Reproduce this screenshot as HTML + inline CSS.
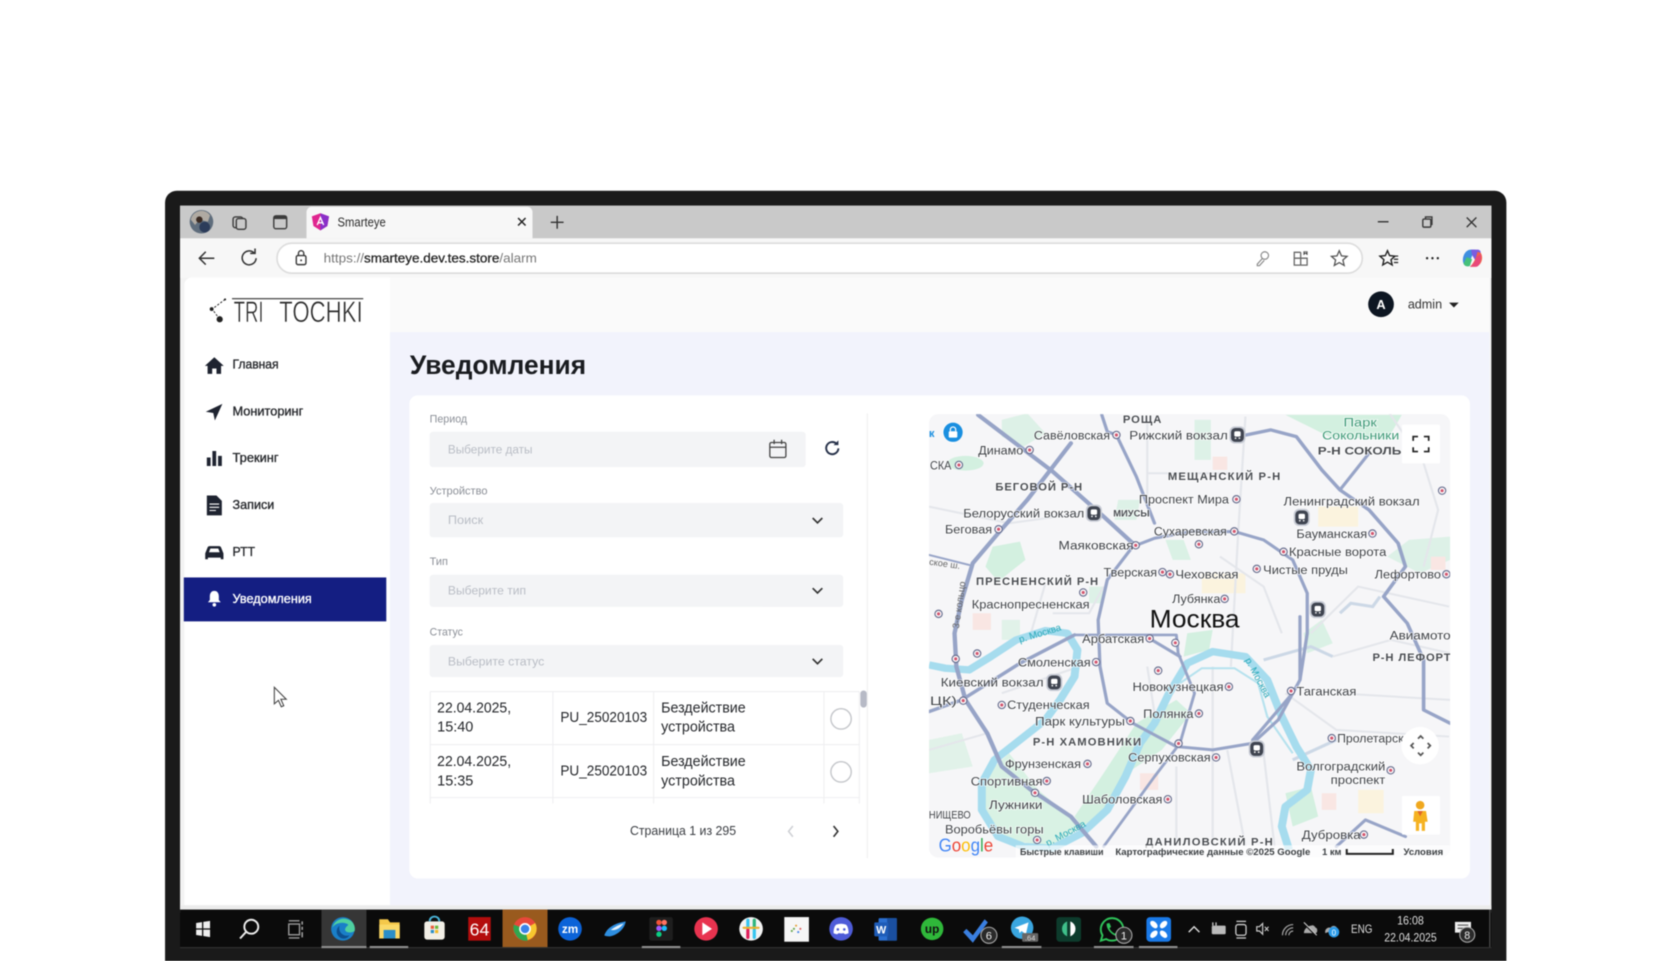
<!DOCTYPE html>
<html lang="ru">
<head>
<meta charset="utf-8">
<title>Smarteye</title>
<style>
html,body{margin:0;padding:0;background:#fff;width:1680px;height:961px;overflow:hidden}
svg{display:block;position:absolute;left:0;top:0;filter:blur(.4px)}
text{font-family:"Liberation Sans","Noto Sans CJK SC",sans-serif}
.lb{fill:#404348;font-size:11.5px;paint-order:stroke;stroke:#fff;stroke-width:1.4px;stroke-opacity:.75}
.bd{fill:#4a4d52;font-size:10.5px;font-weight:700;paint-order:stroke;stroke:#fff;stroke-width:1.4px;stroke-opacity:.75}
.nav{font-size:12px;fill:#26282c;stroke:#26282c;stroke-width:.3px}
.fl{font-size:10px;fill:#8b8f97}
.ph{font-size:11.5px;fill:#b9bdc5}
.td{font-size:13.5px;fill:#26282c}
.ft{font-size:9px;fill:#3c4043;font-weight:700}
.ic{fill:none;stroke:#3a3a3a;stroke-width:1.3}
</style>
</head>
<body>
<svg width="1680" height="961" viewBox="0 0 1568 897" xmlns="http://www.w3.org/2000/svg">
<defs>
<clipPath id="mapclip"><rect x="867" y="386.5" width="486.5" height="414" rx="9"/></clipPath>
<symbol id="d" overflow="visible"><circle r="3.4" fill="#fff" stroke="#6a6f8f" stroke-width="1.1"/><circle r="1.5" fill="#d2566f"/></symbol>
<symbol id="s" overflow="visible"><rect x="-7.500" y="-8" width="15" height="16" rx="5" fill="#c6cad4"/><rect x="-6" y="-6.5" width="12" height="13" rx="4" fill="#3f4450"/><rect x="-3" y="-3.5" width="6" height="5" rx="1.5" fill="#fff"/><circle cx="-1.8" cy="3" r=".8" fill="#fff"/><circle cx="1.8" cy="3" r=".8" fill="#fff"/></symbol>
</defs>

<!-- monitor bezel -->
<rect x="154" y="178" width="1252" height="735" rx="11" fill="#1a1a1a"/>
<rect x="168" y="192" width="1224" height="660" fill="#f3f3f3"/>

<!-- tab strip -->
<rect x="168" y="192" width="1224" height="30.5" fill="#c9c9c9"/>
<path d="M286 222.500V198a5 5 0 0 1 5-5H492a5 5 0 0 1 5 5V222.500Z" fill="#f7f7f7"/>
<circle cx="188" cy="207" r="11" fill="#5f6d7c"/>
<path d="M178 205a10 10 0 0 1 18-4l-2 6-8-2-4 5Z" fill="#b0aaa2"/>
<circle cx="191" cy="212" r="5" fill="#2c3c5a"/>
<circle cx="186" cy="205" r="3" fill="#3a2a22"/>
<rect x="217.500" y="202.500" width="9" height="10" rx="2" class="ic"/>
<rect x="220.500" y="204" width="9" height="10" rx="2" fill="#c9c9c9" stroke="#3a3a3a" stroke-width="1.300"/>
<rect x="255.500" y="201.500" width="12" height="12" rx="2" class="ic" stroke-width="1.500"/>
<rect x="255.500" y="201.500" width="12" height="3" fill="#3a3a3a"/>
<path d="M299 199l8 3-1.500 9-6.500 4-6.500-4-1.500-9Z" fill="#e0258f"/>
<path d="M299 199l8 3-1.500 9-6.500 4Z" fill="#8a2fc8"/>
<path d="M296 210l3-7 3 7M297 208h4" fill="none" stroke="#fff" stroke-width="1.300"/>
<text x="315" y="211.500" font-size="12" fill="#2b2b2b" textLength="45" lengthAdjust="spacingAndGlyphs">Smarteye</text>
<path d="M483.500 203.500l7 7M490.500 203.500l-7 7" stroke="#222" stroke-width="1.400"/>
<path d="M520 201.500v12M514 207.500h12" stroke="#333" stroke-width="1.300"/>
<path d="M1286 207h10" stroke="#333" stroke-width="1.300"/>
<rect x="1328" y="204.500" width="7.500" height="7.500" rx="1.200" class="ic"/>
<path d="M1330.500 204v-1.500h6v7h-1" class="ic"/>
<path d="M1369 203l9 9M1378 203l-9 9" stroke="#333" stroke-width="1.200"/>

<!-- toolbar -->
<rect x="168" y="222.500" width="1224" height="37" fill="#f7f7f7"/>
<rect x="258.500" y="227" width="1013" height="28" rx="14" fill="#fff" stroke="#dcdcdc" stroke-width="1.500"/>
<path d="M200 241h-14M192 235l-6 6 6 6" fill="none" stroke="#333" stroke-width="1.400"/>
<path d="M239 241a6.500 6.500 0 1 1-2-5M238 232v4.500h-4.500" fill="none" stroke="#333" stroke-width="1.400"/>
<rect x="276.500" y="238.500" width="9" height="8.500" rx="1.500" class="ic"/>
<path d="M278.500 238.500v-2a2.500 2.500 0 0 1 5 0v2" class="ic"/>
<circle cx="281" cy="243" r=".9" fill="#3a3a3a"/>
<text x="302" y="245" font-size="12" fill="#777" textLength="199" lengthAdjust="spacingAndGlyphs">https://<tspan fill="#222" stroke="#222" stroke-width=".25">smarteye.dev.tes.store</tspan>/alarm</text>
<circle cx="1180.500" cy="238.500" r="3.500" fill="none" stroke="#8a8a8a" stroke-width="1.100"/>
<path d="M1178 241.500l-4.500 5v1.500h2l4.500-5" fill="none" stroke="#8a8a8a" stroke-width="1.100"/>
<path d="M1214 235.500h-6v12h12v-6.500h-12M1214 235.500v12" fill="none" stroke="#666" stroke-width="1.200"/>
<path d="M1217 235h3v3M1220 235h-3v3" stroke="#666" stroke-width="1"/>
<path d="M1250 234l2.100 4.800 5.200.5-3.900 3.400 1.200 5.100-4.600-2.700-4.600 2.700 1.200-5.100-3.900-3.400 5.200-.5Z" fill="none" stroke="#555" stroke-width="1.200"/>
<path d="M1295 234l2 4.600 5 .5-3.700 3.300 1.100 4.900-4.400-2.600-4.400 2.600 1.100-4.900-3.700-3.300 5-.5Z" fill="none" stroke="#222" stroke-width="1.300"/>
<path d="M1300 239h5M1301 242h4M1301 245h4" stroke="#222" stroke-width="1.100"/>
<circle cx="1332" cy="241" r="1.100" fill="#222"/><circle cx="1337" cy="241" r="1.100" fill="#222"/><circle cx="1342" cy="241" r="1.100" fill="#222"/>
<path d="M1366 246c-2-5 1-13 7-13h4c-2 4-5 8-5 15-2 1-5 0-6-2Z" fill="#3f8fe0"/>
<path d="M1373 233h6c3 0 4 3 2 5l-4 5-3-5Z" fill="#7b5ce0"/>
<path d="M1382 236c3 4 1 13-6 13h-4c3-3 6-8 7-14Z" fill="#f0644a"/>
<path d="M1366 246c1 3 4 3 6 2l2-6-5-2Z" fill="#46c07a"/>
<path d="M1378 249h-6c3-2 5-5 6-9l4-3c1 5-1 12-4 12Z" fill="#e8487a"/>

<!-- page shell -->
<path d="M172 845V266a7 7 0 0 1 7-7H1383a7 7 0 0 1 7 7V845Z" fill="#fff"/>
<rect x="364" y="259" width="1026" height="51" fill="#fafafa"/>
<rect x="364" y="310" width="1026" height="535" fill="#f2f3fc"/>
<rect x="168" y="845" width="1224" height="4" fill="#ececec"/>

<!-- logo -->
<path d="M210 279.500L198 288.500L205 298" fill="none" stroke="#222" stroke-width=".9" stroke-dasharray="2 1.500"/>
<circle cx="210" cy="279.500" r="1" fill="#222"/><circle cx="197.500" cy="288.500" r="1.800" fill="#222"/><circle cx="205" cy="298" r="2.900" fill="#222"/>
<path d="M216.500 278.800H339" stroke="#333" stroke-width="1"/>
<text x="218" y="300.500" font-size="28" fill="#2a2a2a" stroke="#fff" stroke-width=".5" textLength="28" lengthAdjust="spacingAndGlyphs">TRI</text>
<text x="260.500" y="300.500" font-size="28" fill="#2a2a2a" stroke="#fff" stroke-width=".5" textLength="78" lengthAdjust="spacingAndGlyphs">TOCHKI</text>

<!-- sidebar -->
<path d="M200 333.500l-8.800 8h2.500v7.500h4.300v-5h4v5h4.300v-7.500h2.500Z" fill="#1e2330"/>
<text class="nav" x="217" y="344" textLength="43" lengthAdjust="spacingAndGlyphs">Главная</text>
<path d="M207.500 377L192 384.300 199 385.500 200.500 392.500Z" fill="#1e2330"/>
<text class="nav" x="217" y="388" textLength="66" lengthAdjust="spacingAndGlyphs">Мониторинг</text>
<path d="M193 427h3.500v8H193ZM198.200 421h3.500v14h-3.500ZM203.500 425.500H207v9.500h-3.500Z" fill="#1e2330"/>
<text class="nav" x="217" y="431" textLength="43" lengthAdjust="spacingAndGlyphs">Трекинг</text>
<path d="M193 462.500h9l5 5v13.500h-14Z" fill="#1e2330"/><path d="M195.500 470.500h9M195.500 473.500h9M195.500 476.500h6" stroke="#fff" stroke-width="1"/>
<text class="nav" x="217" y="475" textLength="39" lengthAdjust="spacingAndGlyphs">Записи</text>
<path d="M191.500 516.500l2.200-5.500c.3-.7 1-1.200 1.800-1.200h9c.8 0 1.500.5 1.800 1.200l2.200 5.500v5.500h-2.500v-1.500h-12v1.500h-2.500Z" fill="#1e2330"/><path d="M195 515.500l1.300-3.500h7.400l1.300 3.500Z" fill="#fff"/>
<text class="nav" x="217" y="519" textLength="21" lengthAdjust="spacingAndGlyphs">РТТ</text>
<rect x="171.500" y="539" width="189" height="41" fill="#141e82"/>
<path d="M200 551.500c-2.800 0-4.200 2.300-4.200 5v3.500l-1.800 2.200h12l-1.800-2.200v-3.500c0-2.700-1.400-5-4.200-5Z" fill="#fff"/><circle cx="200" cy="564.500" r="1.700" fill="#fff"/>
<text class="nav" x="217" y="563" style="fill:#fff;stroke:#fff" textLength="74" lengthAdjust="spacingAndGlyphs">Уведомления</text>
<path d="M256 641.500v15.500l3.800-3.300 2.700 6 2.300-1-2.700-6h5Z" fill="#fff" stroke="#444" stroke-width="1"/>

<!-- header -->
<circle cx="1289" cy="284" r="12" fill="#0d1622"/>
<text x="1289" y="288.500" font-size="12" font-weight="700" fill="#fff" text-anchor="middle">A</text>
<text x="1314" y="288" font-size="12" fill="#333" textLength="32" lengthAdjust="spacingAndGlyphs">admin</text>
<path d="M1352.500 282.500h9l-4.500 4.500Z" fill="#222"/>

<!-- title -->
<text x="382.500" y="349" font-size="25" font-weight="700" fill="#1a1c20" textLength="164.500" lengthAdjust="spacingAndGlyphs">Уведомления</text>

<!-- card -->
<rect x="382" y="369" width="990" height="451" rx="8" fill="#fff"/>
<path d="M809.500 386v415" stroke="#eeeeef" stroke-width="1"/>

<!-- form -->
<text class="fl" x="401" y="394.500" textLength="35" lengthAdjust="spacingAndGlyphs">Период</text>
<rect x="401" y="403" width="351" height="33" rx="3" fill="#f3f4f6"/>
<text class="ph" x="418" y="423.500" textLength="79" lengthAdjust="spacingAndGlyphs">Выберите даты</text>
<rect x="718.500" y="413" width="15" height="14" rx="1.500" fill="none" stroke="#444" stroke-width="1.200"/>
<path d="M718.500 417.500h15M722.500 410.500v4M729.500 410.500v4" stroke="#444" stroke-width="1.200"/>
<path d="M782.500 418.500a5.700 5.700 0 1 1-1.700-4.300" fill="none" stroke="#27324a" stroke-width="1.800"/>
<path d="M782.500 411v4.500H778Z" fill="#27324a"/>

<text class="fl" x="401" y="461.500" textLength="54" lengthAdjust="spacingAndGlyphs">Устройство</text>
<rect x="401" y="469.500" width="386" height="32" rx="3" fill="#f3f4f6"/>
<text class="ph" x="418" y="489" textLength="33" lengthAdjust="spacingAndGlyphs">Поиск</text>
<path d="M758.500 483.500l4.500 4.500 4.500-4.500" fill="none" stroke="#333" stroke-width="1.500"/>

<text class="fl" x="401" y="527.500" textLength="17" lengthAdjust="spacingAndGlyphs">Тип</text>
<rect x="401" y="536.500" width="386" height="30" rx="3" fill="#f3f4f6"/>
<text class="ph" x="418" y="555" textLength="73" lengthAdjust="spacingAndGlyphs">Выберите тип</text>
<path d="M758.500 549l4.500 4.500 4.500-4.500" fill="none" stroke="#333" stroke-width="1.500"/>

<text class="fl" x="401" y="593" textLength="31" lengthAdjust="spacingAndGlyphs">Статус</text>
<rect x="401" y="602" width="386" height="30" rx="3" fill="#f3f4f6"/>
<text class="ph" x="418" y="621" textLength="90" lengthAdjust="spacingAndGlyphs">Выберите статус</text>
<path d="M758.500 615l4.500 4.500 4.500-4.500" fill="none" stroke="#333" stroke-width="1.500"/>

<!-- table -->
<g stroke="#efeff1" stroke-width="1" fill="none">
<path d="M401.500 645.500H802M401.500 695H802M401.500 744.500H802"/>
<path d="M401.500 645.500V750M516 645.500V750M610 645.500V750M769 645.500V750M802 645.500V750"/>
</g>
<text class="td" x="408" y="665" textLength="69" lengthAdjust="spacingAndGlyphs">22.04.2025,</text>
<text class="td" x="408" y="683">15:40</text>
<text class="td" x="523" y="674" textLength="81" lengthAdjust="spacingAndGlyphs">PU_25020103</text>
<text class="td" x="617" y="665" textLength="79" lengthAdjust="spacingAndGlyphs">Бездействие</text>
<text class="td" x="617" y="683" textLength="69" lengthAdjust="spacingAndGlyphs">устройства</text>
<circle cx="785" cy="671" r="9.500" fill="#fff" stroke="#c4c6ca" stroke-width="1.300"/>
<text class="td" x="408" y="715" textLength="69" lengthAdjust="spacingAndGlyphs">22.04.2025,</text>
<text class="td" x="408" y="733">15:35</text>
<text class="td" x="523" y="724" textLength="81" lengthAdjust="spacingAndGlyphs">PU_25020103</text>
<text class="td" x="617" y="715" textLength="79" lengthAdjust="spacingAndGlyphs">Бездействие</text>
<text class="td" x="617" y="733" textLength="69" lengthAdjust="spacingAndGlyphs">устройства</text>
<circle cx="785" cy="720.500" r="9.500" fill="#fff" stroke="#c4c6ca" stroke-width="1.300"/>
<rect x="803" y="644.500" width="6" height="16" rx="3" fill="#b7bac6"/>

<text x="588" y="779.500" font-size="12" fill="#3a3d42" textLength="99" lengthAdjust="spacingAndGlyphs">Страница 1 из 295</text>
<path d="M740 771l-4 5 4 5" fill="none" stroke="#cfd1d5" stroke-width="1.500"/>
<path d="M778 771l4 5-4 5" fill="none" stroke="#333" stroke-width="1.500"/>

<!-- map -->
<g clip-path="url(#mapclip)">
<rect x="867" y="386.500" width="487" height="414" fill="#f6f6f8"/>
<g transform="translate(840 373.300) scale(.3394 .3111)">
  <g fill="#d3f0e0">
    <path d="M280 60l70-20 50 60-60 40-60-30Z" opacity=".7"/>
    <ellipse cx="180" cy="190" rx="50" ry="22"/>
    <path d="M255 440L330 425 345 480 270 545 235 500Z"/>
    <path d="M1060 45H1380L1340 120 1180 110Z"/>
    <path d="M810 60h45v120h-45Z" opacity=".7"/>
    <path d="M730 420l50 0 20 60-50 0Z" opacity=".8"/>
    <path d="M790 700L860 690 850 750 780 770Z"/>
    <path d="M650 970L760 900 800 940 720 1050 610 1130 570 1230 500 1280 480 1250 560 1120Z"/>
    <path d="M1340 470L1400 420 1513 410 1513 480 1430 520Z" opacity=".7"/>
    <path d="M280 660h50v60h-50Z" opacity=".6"/>
    <path d="M1110 700l50-40 30 70-70 30Z" opacity=".8"/>
    <path d="M1060 1180l70-20 20 90-70 30Z"/>
    <path d="M80 1020l90-20 30 100-120 20Z" opacity=".6"/>
    <path d="M600 300l60 0-10 60-60 0Z" opacity=".7"/>
    <path d="M520 560h40v50h-40Z" opacity=".7"/>
  </g>
  <path d="M230 1130L300 1060 380 1170 500 1280 420 1340 290 1320 230 1240Z" fill="#d9f2e4"/>
  <g fill="#fbf3de">
    <path d="M830 520h120v60H830Z"/><path d="M1150 320h110v60h-110Z"/><path d="M860 170h40v40h-40Z" fill="#f9e6e3"/>
    <path d="M1260 1170h70v70h-70Z"/><path d="M1160 1180h40v50h-40Z" fill="#f9e6e3"/><path d="M200 640h50v50h-50Z" fill="#f9e6e3"/>
    <path d="M660 1120h50v50h-50Z" fill="#f9e6e3"/><path d="M1460 470h40v40h-40Z" fill="#f9e6e3"/>
  </g>
  <g fill="none" stroke="#e4e6eb" stroke-width="6">
    <path d="M80 320L300 370 500 340"/><path d="M680 60V300M680 220L950 220"/><path d="M950 50L930 400 910 800"/>
    <path d="M420 640H520L560 560"/><path d="M880 470L1000 560 1050 700"/><path d="M1060 880L1200 990 1510 1010"/>
    <path d="M1130 700L1260 560 1510 620"/><path d="M1200 880L1513 900"/><path d="M860 800V1340"/><path d="M1000 1060L1030 1340"/>
    <path d="M760 1100V1340M900 1050L950 1340"/><path d="M80 1050L240 1000"/><path d="M280 880L520 790"/><path d="M1340 30L1440 190 1480 330 1440 500"/>
    <path d="M680 800L700 940"/><path d="M400 550L360 700"/><path d="M1190 770L1350 720 1513 760"/>
  </g>
  <g fill="none" stroke="#ccd8e6" stroke-width="9">
    <path d="M1210 640l30-30 60 10 20-30"/><path d="M1000 780L1130 740 1190 770"/><path d="M1080 1080L1200 1020"/>
  </g>
  <path d="M80 795L125 805 190 810 250 770 320 720 400 692 460 700 488 750 480 830 440 900 400 960 330 1020 260 1080 225 1150 225 1230 270 1310 340 1340 420 1345 500 1300 570 1230 620 1130 660 1030 700 970 740 880 790 790 860 755 950 770 1010 840 1050 950 1090 1040 1130 1110 1120 1170 1060 1220 1050 1280 1070 1350" fill="none" stroke="#a6dcee" stroke-width="22" stroke-linejoin="round"/>
  <path d="M770 850L830 805 920 805 985 850 1010 950 1080 1060" fill="none" stroke="#b6e2ee" stroke-width="6"/>
  <g fill="none" stroke="#97a4c7" stroke-width="9" stroke-linejoin="round" stroke-linecap="round">
    <path d="M700 415L640 440 570 540 545 660 550 800 570 910 640 970 760 1040 860 1050 970 1030 1040 960 1100 840 1120 700 1120 580 1080 480 1000 420 920 395 800 395Z"/>
    <path d="M215 45L420 215 560 350 650 440" stroke-width="12"/>
    <path d="M470 130L410 215 350 300 270 400 200 490 170 600 150 700 155 800 180 900 240 1000 280 1100 360 1170 470 1250 540 1340" stroke-width="12"/>
    <path d="M555 45l15 50 25 10 55 125 50 140"/>
    <path d="M930 110L1020 90 1090 110 1160 210 1210 270 1290 330 1370 430 1390 500 1330 590 1395 670 1440 780 1440 930 1513 970" stroke-width="10"/>
    <path d="M1210 270L1290 160"/>
    <path d="M480 705H760L765 760 810 880 770 1030 700 1130 560 1340" stroke-width="8"/>
    <path d="M480 705L330 790 170 900 80 935" stroke-width="10"/>
    <path d="M1080 880L970 1020"/>
    <path d="M1100 840V650"/>
    <path d="M1390 1310L1280 1260 1200 1340"/>
    <path d="M685 715L770 770"/>
    <path d="M190 495L80 465" stroke-width="6"/>
  </g>
</g>

<!-- district labels -->
<text class="bd" x="1048" y="395" textLength="36" lengthAdjust="spacing">РОЩА</text>
<text class="lb" x="1254" y="398" style="fill:#3f9a78" textLength="31" lengthAdjust="spacingAndGlyphs">Парк</text>
<text class="lb" x="1234" y="410" style="fill:#3f9a78" textLength="72" lengthAdjust="spacingAndGlyphs">Сокольники</text>
<text class="bd" x="1230" y="424" textLength="78" lengthAdjust="spacingAndGlyphs">Р-Н СОКОЛЬ</text>
<text class="bd" x="929" y="458" textLength="81" lengthAdjust="spacing">БЕГОВОЙ Р-Н</text>
<text class="bd" x="1090" y="448" textLength="105" lengthAdjust="spacing">МЕЩАНСКИЙ Р-Н</text>
<text class="bd" x="1039" y="482" style="font-size:9px" textLength="34" lengthAdjust="spacingAndGlyphs">МИУСЫ</text>
<text class="bd" x="911" y="546" textLength="114" lengthAdjust="spacing">ПРЕСНЕНСКИЙ Р-Н</text>
<text class="bd" x="964" y="696" textLength="101" lengthAdjust="spacing">Р-Н ХАМОВНИКИ</text>
<text class="bd" x="1069" y="789" textLength="119" lengthAdjust="spacing">ДАНИЛОВСКИЙ Р-Н</text>
<text class="bd" x="1281" y="617" textLength="73" lengthAdjust="spacing">Р-Н ЛЕФОРТ</text>

<!-- stations -->
<g>
<text class="lb" x="965" y="410" textLength="71" lengthAdjust="spacingAndGlyphs">Савёловская</text>
<text class="lb" x="1054" y="410" textLength="92" lengthAdjust="spacingAndGlyphs">Рижский вокзал</text>
<text class="lb" x="913" y="424" textLength="42" lengthAdjust="spacingAndGlyphs">Динамо</text>
<text class="lb" x="868" y="438" textLength="20" lengthAdjust="spacingAndGlyphs">СКА</text>
<text class="lb" x="1063" y="470" textLength="84" lengthAdjust="spacingAndGlyphs">Проспект Мира</text>
<text class="lb" x="1198" y="472" textLength="127" lengthAdjust="spacingAndGlyphs">Ленинградский вокзал</text>
<text class="lb" x="899" y="483" textLength="113" lengthAdjust="spacingAndGlyphs">Белорусский вокзал</text>
<text class="lb" x="882" y="498" textLength="44" lengthAdjust="spacingAndGlyphs">Беговая</text>
<text class="lb" x="1077" y="500" textLength="68" lengthAdjust="spacingAndGlyphs">Сухаревская</text>
<text class="lb" x="1210" y="502" textLength="66" lengthAdjust="spacingAndGlyphs">Бауманская</text>
<text class="lb" x="988" y="513" textLength="70" lengthAdjust="spacingAndGlyphs">Маяковская</text>
<text class="lb" x="1203" y="519" textLength="91" lengthAdjust="spacingAndGlyphs">Красные ворота</text>
<text class="lb" x="1179" y="536" textLength="79" lengthAdjust="spacingAndGlyphs">Чистые пруды</text>
<text class="lb" x="1283" y="540" textLength="62" lengthAdjust="spacingAndGlyphs">Лефортово</text>
<text class="lb" x="1030" y="538" textLength="50" lengthAdjust="spacingAndGlyphs">Тверская</text>
<text class="lb" x="1097" y="540" textLength="59" lengthAdjust="spacingAndGlyphs">Чеховская</text>
<text class="lb" x="1094" y="563" textLength="45" lengthAdjust="spacingAndGlyphs">Лубянка</text>
<text class="lb" x="907" y="568" textLength="110" lengthAdjust="spacingAndGlyphs">Краснопресненская</text>
<text class="lb" x="1010" y="600" textLength="58" lengthAdjust="spacingAndGlyphs">Арбатская</text>
<text class="lb" x="1297" y="597" textLength="57" lengthAdjust="spacingAndGlyphs">Авиамото</text>
<text class="lb" x="950" y="622" textLength="68" lengthAdjust="spacingAndGlyphs">Смоленская</text>
<text class="lb" x="878" y="641" textLength="96" lengthAdjust="spacingAndGlyphs">Киевский вокзал</text>
<text class="lb" x="1057" y="645" textLength="85" lengthAdjust="spacingAndGlyphs">Новокузнецкая</text>
<text class="lb" x="1210" y="649" textLength="56" lengthAdjust="spacingAndGlyphs">Таганская</text>
<text class="lb" x="940" y="662" textLength="77" lengthAdjust="spacingAndGlyphs">Студенческая</text>
<text class="lb" x="868" y="658" textLength="25" lengthAdjust="spacingAndGlyphs">ЦК)</text>
<text class="lb" x="1067" y="670" textLength="47" lengthAdjust="spacingAndGlyphs">Полянка</text>
<text class="lb" x="966" y="677" textLength="84" lengthAdjust="spacingAndGlyphs">Парк культуры</text>
<text class="lb" x="1248" y="693" textLength="62" lengthAdjust="spacingAndGlyphs">Пролетарск</text>
<text class="lb" x="1053" y="711" textLength="77" lengthAdjust="spacingAndGlyphs">Серпуховская</text>
<text class="lb" x="938" y="717" textLength="71" lengthAdjust="spacingAndGlyphs">Фрунзенская</text>
<text class="lb" x="1210" y="719" textLength="83" lengthAdjust="spacingAndGlyphs">Волгоградский</text>
<text class="lb" x="1242" y="732" textLength="51" lengthAdjust="spacingAndGlyphs">проспект</text>
<text class="lb" x="906" y="733" textLength="67" lengthAdjust="spacingAndGlyphs">Спортивная</text>
<text class="lb" x="923" y="755" textLength="50" lengthAdjust="spacingAndGlyphs">Лужники</text>
<text class="lb" x="1010" y="750" textLength="75" lengthAdjust="spacingAndGlyphs">Шаболовская</text>
<text class="lb" x="867" y="764" style="font-size:10px" textLength="39" lengthAdjust="spacingAndGlyphs">НИЩЕВО</text>
<text class="lb" x="882" y="778" textLength="92" lengthAdjust="spacingAndGlyphs">Воробьёвы горы</text>
<text class="lb" x="1215" y="783" textLength="55" lengthAdjust="spacingAndGlyphs">Дубровка</text>
</g>
<text x="1073" y="585.500" font-size="23" fill="#111" textLength="84" lengthAdjust="spacingAndGlyphs">Москва</text>
<g>
<text transform="translate(952 600) rotate(-17)" style="font-size:9px;fill:#27a8b8">р. Москва</text>
<text transform="translate(1162 616) rotate(62)" style="font-size:9px;fill:#27a8b8">р. Москва</text>
<text transform="translate(978 790) rotate(-28)" style="font-size:9px;fill:#27a8b8">р. Москва</text>
</g>
<text transform="translate(895 587) rotate(-82)" style="font-size:9px;fill:#666">3-е кольцо</text>
<text transform="translate(867 527) rotate(8)" style="font-size:8.500px;fill:#666">ское ш.</text>

<!-- metro dots -->
<g>
<use href="#d" x="1042" y="406"/><use href="#d" x="961" y="420"/><use href="#d" x="895" y="434"/><use href="#d" x="1154" y="466"/>
<use href="#d" x="932" y="494"/><use href="#d" x="1152" y="496"/><use href="#d" x="1281" y="498"/><use href="#d" x="1060" y="509"/>
<use href="#d" x="1119" y="508"/><use href="#d" x="1198" y="515"/><use href="#d" x="1173" y="531"/><use href="#d" x="1350" y="536"/>
<use href="#d" x="1085" y="534"/><use href="#d" x="1092" y="536"/><use href="#d" x="1011" y="553"/><use href="#d" x="1143" y="559"/>
<use href="#d" x="1073" y="596"/><use href="#d" x="1097" y="600"/><use href="#d" x="1023" y="618"/><use href="#d" x="1081" y="626"/>
<use href="#d" x="892" y="615"/><use href="#d" x="912" y="610"/><use href="#d" x="1147" y="641"/><use href="#d" x="1205" y="645"/>
<use href="#d" x="935" y="658"/><use href="#d" x="899" y="654"/><use href="#d" x="1119" y="666"/><use href="#d" x="1055" y="673"/>
<use href="#d" x="1100" y="694"/><use href="#d" x="1243" y="689"/><use href="#d" x="1135" y="707"/><use href="#d" x="1015" y="713"/>
<use href="#d" x="1298" y="719"/><use href="#d" x="977" y="729"/><use href="#d" x="966" y="740"/><use href="#d" x="1090" y="746"/>
<use href="#d" x="968" y="784"/><use href="#d" x="1273" y="779"/><use href="#d" x="876" y="573"/><use href="#d" x="1346" y="458"/>
<use href="#s" x="1155" y="406"/><use href="#s" x="1021" y="479"/><use href="#s" x="1215" y="483"/><use href="#s" x="1230" y="569"/>
<use href="#s" x="984" y="637"/><use href="#s" x="1173" y="699"/>
</g>

<!-- lock pin -->
<path d="M889 394a9.500 9.500 0 0 1 9.500 9.500c0 4-3.500 7-9.500 11-6-4-9.500-7-9.500-11A9.500 9.500 0 0 1 889 394Z" fill="#fff" opacity=".75"/>
<circle cx="889.500" cy="403.500" r="9" fill="#1a8fe0"/>
<rect x="885.500" y="402.500" width="8" height="6" rx="1" fill="#fff"/>
<path d="M887 402.500v-1.500a2.500 2.500 0 0 1 5 0v1.500" fill="none" stroke="#fff" stroke-width="1.100"/>
<text x="867" y="408" font-size="10.500" fill="#1a8fe0" font-weight="700">к</text>

<!-- map controls -->
<rect x="1308.500" y="396.500" width="35.500" height="36" rx="1" fill="#fff"/>
<path d="M1319 411.500v-4h4.500M1329 407.500h4.500v4M1333.500 417.500v4h-4.500M1323.500 421.500H1319v-4" fill="none" stroke="#222" stroke-width="1.600"/>
<circle cx="1325.500" cy="696" r="17.500" fill="#fff"/>
<path d="M1323.500 689.500l2.500-2.500 2.500 2.500M1323.500 702.500l2.500 2.500 2.500-2.500M1319.500 693.500l-2.500 2.500 2.500 2.500M1332.500 693.500l2.500 2.500-2.500 2.500" fill="none" stroke="#555" stroke-width="1.600"/>
<rect x="1308.500" y="743" width="35.500" height="36" rx="1" fill="#fff"/>
<circle cx="1325.500" cy="751.500" r="4" fill="#f0a81e"/>
<path d="M1320 757h11l1.500 10h-2.500v8.500h-3v-7h-2.500v7h-3v-8.500h-2.500Z" fill="#f5b221"/>
<path d="M1323 757l2.500 5 2.500-5Z" fill="#e0662a"/>

<!-- map footer -->
<rect x="948" y="789" width="406" height="12" fill="#fff" opacity=".65"/>
<text x="876" y="795" font-size="17" textLength="51" lengthAdjust="spacingAndGlyphs" stroke="#fff" stroke-width=".6" paint-order="stroke"><tspan fill="#4285f4">G</tspan><tspan fill="#ea4335">o</tspan><tspan fill="#fbbc05">o</tspan><tspan fill="#4285f4">g</tspan><tspan fill="#34a853">l</tspan><tspan fill="#ea4335">e</tspan></text>
<text class="ft" x="952" y="798" textLength="78" lengthAdjust="spacingAndGlyphs">Быстрые клавиши</text>
<text class="ft" x="1041" y="798" textLength="182" lengthAdjust="spacingAndGlyphs">Картографические данные ©2025 Google</text>
<text class="ft" x="1234" y="798" textLength="18" lengthAdjust="spacingAndGlyphs">1 км</text>
<path d="M1257 792.500v4.500h43V792.500" fill="none" stroke="#222" stroke-width="1.900"/>
<text class="ft" x="1310" y="798" textLength="37" lengthAdjust="spacingAndGlyphs">Условия</text>
</g>

<!-- taskbar -->
<rect x="168" y="849" width="1224" height="35" fill="#0b0b0b"/>
<rect x="168" y="884" width="1224" height="1" fill="#333"/>
<rect x="300" y="849" width="42" height="35" fill="#363636"/>
<rect x="469" y="849" width="42" height="35" fill="#995a1e"/>
<g fill="#8f8f8f">
<rect x="300" y="883" width="42" height="2"/><rect x="345" y="883" width="36" height="2"/><rect x="599" y="883" width="36" height="2"/>
<rect x="935" y="883" width="37" height="2"/><rect x="1021" y="883" width="37" height="2"/><rect x="1063" y="883" width="36" height="2"/>
</g>
<!-- start, search, task view -->
<path d="M183 861.500l5.500-.8v5.800H183ZM189.700 860.500l6.300-1v7h-6.300ZM183 867.700h5.500v5.800l-5.500-.8ZM189.700 867.700h6.300v7l-6.300-1Z" fill="#eee"/>
<circle cx="234.500" cy="865" r="6.500" fill="none" stroke="#eee" stroke-width="1.800"/>
<path d="M229.500 870l-5.500 6" stroke="#eee" stroke-width="1.800"/>
<path d="M269.500 859.500h10M269.500 875.500h10" stroke="#999" stroke-width="1.300"/><rect x="269.500" y="862.500" width="10" height="10" fill="none" stroke="#999" stroke-width="1.300"/><path d="M282 860v3M282 865v3M282 870v5" stroke="#999" stroke-width="1.500"/>
<!-- edge -->
<circle cx="320" cy="867" r="11" fill="#1a7fc8"/>
<path d="M310 866c2-7 9-10 14-8 5 1 8 6 7 11-3 2-8 2-9-1 0-3 3-4 3-5-4-3-12-2-15 3Z" fill="#4fd0a0"/>
<path d="M316 874c-3-3-2-8 1-10-2 5 3 11 9 9-2 4-7 4-10 1Z" fill="#0d4f8e"/>
<!-- explorer -->
<path d="M354 858h8l2 3h9v15h-19Z" fill="#f5c84a"/><rect x="354" y="863" width="19" height="13" fill="#fbd968"/><rect x="358" y="868" width="11" height="8" fill="#2a8ec8"/>
<!-- store -->
<rect x="396" y="860" width="19" height="17" rx="2.500" fill="#f2efe6"/><path d="M401 860c0-6 9-6 9 0" fill="none" stroke="#4ab4d8" stroke-width="1.800"/>
<rect x="402" y="864" width="3" height="3" fill="#e85a3a"/><rect x="406" y="864" width="3" height="3" fill="#6ab83a"/><rect x="402" y="868" width="3" height="3" fill="#2a8ec8"/><rect x="406" y="868" width="3" height="3" fill="#f0b828"/>
<!-- 64 -->
<rect x="437" y="856" width="21" height="22" fill="#b40d0d"/><text x="447.500" y="873" font-size="16.500" fill="#fff" text-anchor="middle">64</text>
<!-- chrome -->
<circle cx="490" cy="867" r="11" fill="#e8473a"/><path d="M490 867l9.500-5.500a11 11 0 0 1-7 16Z" fill="#f7c72e"/><path d="M490 867l2.500 11a11 11 0 0 1-11.500-6Z" fill="#2fa84f"/><path d="M490 867l-9 5a11 11 0 0 1-1.500-9Z" fill="#2fa84f"/><circle cx="490" cy="867" r="5.500" fill="#fff"/><circle cx="490" cy="867" r="4" fill="#3b83e8"/>
<!-- zoom mail -->
<circle cx="532" cy="867" r="11" fill="#0c63d8"/><text x="532" y="871" font-size="11" font-weight="700" fill="#fff" text-anchor="middle">zm</text>
<!-- blue app -->
<path d="M564 873c2-6 8-11 20-13-1 7-8 13-15 14-2 0-4 0-5-1Z" fill="#2e8ee0"/><path d="M570 868c4-3 8-5 12-6-3 4-7 7-12 6Z" fill="#e8f2fa"/>
<!-- figma -->
<rect x="606" y="856" width="22" height="22" rx="2" fill="#1e1e1e"/>
<circle cx="615" cy="861" r="2.500" fill="#f0533a"/><circle cx="620" cy="861" r="2.500" fill="#ff7262"/><circle cx="615" cy="866.500" r="2.500" fill="#a259ff"/><circle cx="620" cy="866.500" r="2.500" fill="#1abcfe"/><circle cx="615" cy="872" r="2.500" fill="#0acf83"/>
<!-- play -->
<circle cx="659" cy="867" r="11" fill="#e8334f"/><path d="M655.500 861v12l9-6Z" fill="#fff"/>
<!-- slack -->
<circle cx="701" cy="867" r="11" fill="#f4f4f4"/><path d="M698 859v7M704 868v7" stroke="#36c5f0" stroke-width="3" stroke-linecap="round"/><path d="M704 859v7" stroke="#2eb67d" stroke-width="3" stroke-linecap="round"/><path d="M698 868v7" stroke="#e01e5a" stroke-width="3" stroke-linecap="round"/><path d="M694 866h14" stroke="#ecb22e" stroke-width="2" stroke-linecap="round"/>
<!-- white -->
<rect x="732" y="856" width="23" height="23" fill="#f6f6f6"/><g fill="#6aa84f"><circle cx="739" cy="869" r="1"/><circle cx="747" cy="867" r="1" fill="#e06666"/><circle cx="743" cy="864" r="1" fill="#e6a23c"/><circle cx="745" cy="870" r="1" fill="#4a86e8"/><circle cx="741" cy="867" r="1"/></g>
<!-- discord -->
<circle cx="785" cy="867" r="11" fill="#4e5cd8"/><path d="M778 871c0-4 1-7 2.500-8 3-1 6-1 9 0 1.500 1 2.500 4 2.500 8-3 1.500-4 1-4.500 0-1 .4-4 .4-5 0-.5 1-1.500 1.500-4.500 0Z" fill="#fff"/><circle cx="782" cy="867.500" r="1.200" fill="#4e5cd8"/><circle cx="788" cy="867.500" r="1.200" fill="#4e5cd8"/>
<!-- word -->
<rect x="820" y="857" width="17" height="21" rx="1" fill="#2b6fd0"/><rect x="828" y="857" width="9" height="21" fill="#1a4fa0"/><rect x="816" y="861" width="13" height="13" rx="1" fill="#1e5cb8"/><text x="822.500" y="871.500" font-size="10" font-weight="700" fill="#fff" text-anchor="middle">W</text>
<!-- upwork -->
<circle cx="870" cy="867" r="10.500" fill="#2fb83a"/><text x="870" y="871" font-size="11" font-weight="700" fill="#111" text-anchor="middle">up</text>
<!-- check -->
<path d="M902 867l6 6 11-15 3 3-14 19-9-10Z" fill="#3a7fe0"/><circle cx="923" cy="873" r="7.500" fill="#2a2a2a" stroke="#aaa" stroke-width="1"/><text x="923" y="877" font-size="10.500" fill="#eee" text-anchor="middle">6</text>
<!-- telegram -->
<circle cx="954" cy="866" r="10.500" fill="#3aa6e0"/><path d="M947 866l13-5-2.500 11-4-3-2 2-.5-3.500Z" fill="#fff"/><rect x="954" y="871" width="15" height="8" rx="1" fill="#666"/><text x="961.500" y="878" font-size="7" fill="#ddd" text-anchor="middle">.64</text>
<!-- dark green -->
<rect x="986" y="856" width="23" height="23" rx="3" fill="#0d3b2c"/><path d="M996 860a7.500 7.500 0 0 0 0 14Z" fill="#3fbf8a"/><path d="M999 860a7.500 7.500 0 0 1 0 14Z" fill="#fff"/>
<!-- whatsapp -->
<path d="M1038 857a10.500 10.500 0 0 1 0 21c-2 0-4-.5-5.500-1.500l-5 1.500 1.500-5a10.500 10.500 0 0 1 9-16Z" fill="none" stroke="#2fc45a" stroke-width="1.800"/><path d="M1033 862l2.500-.5 1.500 3.500-1.500 1.500c1 2 3 4 5 5l1.500-1.500 3.500 1.500-.5 2.500c-5 1-13-6-12-12Z" fill="#2fc45a"/><circle cx="1049" cy="873" r="7.500" fill="#2a2a2a" stroke="#aaa" stroke-width="1"/><text x="1049" y="877" font-size="10.500" fill="#eee" text-anchor="middle">1</text>
<!-- blue X -->
<rect x="1070" y="856" width="23" height="23" rx="3.500" fill="#1a7ae8"/><g fill="#fff"><ellipse cx="1077" cy="863" rx="4.200" ry="2.600" transform="rotate(45 1077 863)"/><ellipse cx="1086" cy="863" rx="4.200" ry="2.600" transform="rotate(-45 1086 863)"/><ellipse cx="1077" cy="872" rx="4.200" ry="2.600" transform="rotate(-45 1077 872)"/><ellipse cx="1086" cy="872" rx="4.200" ry="2.600" transform="rotate(45 1086 872)"/></g>
<!-- tray -->
<path d="M1109.500 870l5-5 5 5" fill="none" stroke="#ddd" stroke-width="1.300"/>
<rect x="1131" y="864" width="13" height="8" rx="1" fill="#bbb"/><path d="M1132 861v3M1135 861v3" stroke="#ccc" stroke-width="1.200"/>
<rect x="1153.500" y="863" width="9.500" height="10" rx="2" fill="none" stroke="#ccc" stroke-width="1.200"/><path d="M1154 860h9M1154 875.500h9" stroke="#ccc" stroke-width="1.200"/>
<path d="M1173 865h2.500l3-3v10l-3-3H1173Z" fill="none" stroke="#ccc" stroke-width="1.100"/><path d="M1180.500 865l3.500 4M1184 865l-3.500 4" stroke="#ccc" stroke-width="1"/>
<path d="M1197 873a10 10 0 0 1 10-10M1200 873a7 7 0 0 1 7-7M1203 873a4 4 0 0 1 4-4" fill="none" stroke="#aaa" stroke-width="1.100"/>
<path d="M1217 871c0-4 4-7 7-7 1-1 3 0 4 2 2 0 2 5 0 5Z" fill="#aaa"/><path d="M1217 862l12 12" stroke="#0b0b0b" stroke-width="1.500"/><path d="M1217 861l12 12" stroke="#ccc" stroke-width="1"/>
<path d="M1237 871c-1-4 3-6 5-5 1-3 6-2 6 1" fill="#aaa"/><circle cx="1245" cy="870" r="5" fill="#2a9ae8"/><text x="1245" y="873" font-size="7.500" fill="#fff" text-anchor="middle">0</text>
<text x="1261" y="871" font-size="11.500" fill="#ddd" textLength="20" lengthAdjust="spacingAndGlyphs">ENG</text>
<text x="1316.500" y="863" font-size="11" fill="#ddd" text-anchor="middle" textLength="25" lengthAdjust="spacingAndGlyphs">16:08</text>
<text x="1292" y="879" font-size="11" fill="#ddd" textLength="49" lengthAdjust="spacingAndGlyphs">22.04.2025</text>
<path d="M1358 860.500h15v10h-7l-3 3v-3h-5Z" fill="#eee"/><path d="M1360.500 863.500h10M1360.500 866.500h10" stroke="#444" stroke-width="1"/>
<circle cx="1369.500" cy="872.500" r="7" fill="#2a2a2a" stroke="#aaa" stroke-width="1"/><text x="1369.500" y="876.500" font-size="10" fill="#eee" text-anchor="middle">8</text>
<rect x="1390" y="849" width="1" height="35" fill="#555"/>
</svg>
</body>
</html>
